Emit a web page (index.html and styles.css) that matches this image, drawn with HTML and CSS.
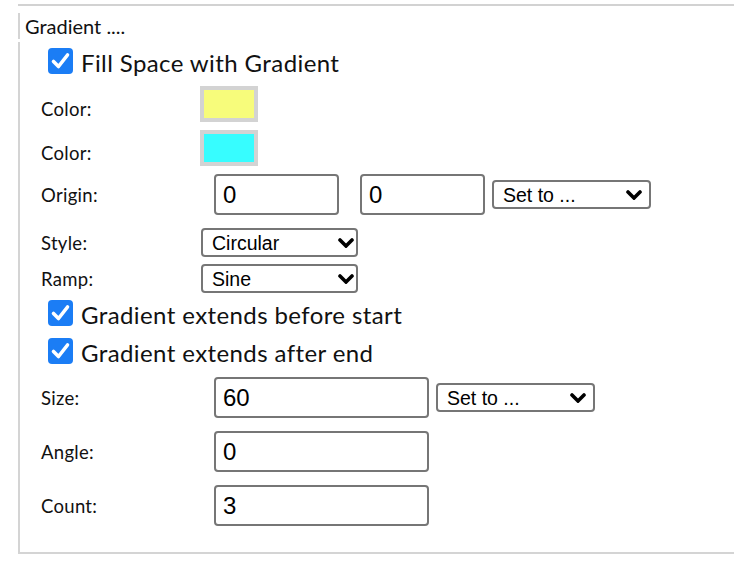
FILE: index.html
```html
<!DOCTYPE html>
<html>
<head>
<meta charset="utf-8">
<link rel="stylesheet" href="styles.css">
</head>
<body>
<div class="page">
  <div class="rule"></div>
  <div class="legend">Gradient ....</div>
  <div class="panel">
    <label class="row check-row">
      <span class="cb"><svg viewBox="0 0 25 26" width="25" height="26"><path d="M5.5 13.5 L10.5 18.5 L19.5 7" fill="none" stroke="#fff" stroke-width="3.6" stroke-linecap="round" stroke-linejoin="round"/></svg></span>
      <span class="cb-text">Fill Space with Gradient</span>
    </label>
    <div class="row color-row m12"><span class="lbl">Color:</span><span class="swatch yellow"></span></div>
    <div class="row color-row m8"><span class="lbl">Color:</span><span class="swatch cyan"></span></div>
    <div class="row input-row m8">
      <span class="lbl">Origin:</span>
      <input class="txt" type="text" value="0">
      <input class="txt second" type="text" value="0">
      <span class="sel-wrap setto"><select class="sel"><option>Set to ...</option></select><svg class="chev" viewBox="0 0 16 10" width="16" height="10"><path d="M2 2 L8 8 L14 2" fill="none" stroke="#000" stroke-width="3.6" stroke-linecap="round" stroke-linejoin="miter"/></svg></span>
    </div>
    <div class="row select-row m13">
      <span class="lbl">Style:</span>
      <span class="sel-wrap small"><select class="sel"><option>Circular</option></select><svg class="chev" viewBox="0 0 16 10" width="16" height="10"><path d="M2 2 L8 8 L14 2" fill="none" stroke="#000" stroke-width="3.6" stroke-linecap="round" stroke-linejoin="miter"/></svg></span>
    </div>
    <div class="row select-row m7">
      <span class="lbl">Ramp:</span>
      <span class="sel-wrap small"><select class="sel"><option>Sine</option></select><svg class="chev" viewBox="0 0 16 10" width="16" height="10"><path d="M2 2 L8 8 L14 2" fill="none" stroke="#000" stroke-width="3.6" stroke-linecap="round" stroke-linejoin="miter"/></svg></span>
    </div>
    <label class="row check-row m7">
      <span class="cb"><svg viewBox="0 0 25 26" width="25" height="26"><path d="M5.5 13.5 L10.5 18.5 L19.5 7" fill="none" stroke="#fff" stroke-width="3.6" stroke-linecap="round" stroke-linejoin="round"/></svg></span>
      <span class="cb-text">Gradient extends before start</span>
    </label>
    <label class="row check-row m12">
      <span class="cb"><svg viewBox="0 0 25 26" width="25" height="26"><path d="M5.5 13.5 L10.5 18.5 L19.5 7" fill="none" stroke="#fff" stroke-width="3.6" stroke-linecap="round" stroke-linejoin="round"/></svg></span>
      <span class="cb-text">Gradient extends after end</span>
    </label>
    <div class="row input-row m13">
      <span class="lbl">Size:</span>
      <input class="txt wide" type="text" value="60">
      <span class="sel-wrap setto"><select class="sel"><option>Set to ...</option></select><svg class="chev" viewBox="0 0 16 10" width="16" height="10"><path d="M2 2 L8 8 L14 2" fill="none" stroke="#000" stroke-width="3.6" stroke-linecap="round" stroke-linejoin="miter"/></svg></span>
    </div>
    <div class="row input-row m13">
      <span class="lbl">Angle:</span>
      <input class="txt wide" type="text" value="0">
    </div>
    <div class="row input-row m13">
      <span class="lbl">Count:</span>
      <input class="txt wide" type="text" value="3">
    </div>
  </div>
</div>
</body>
</html>
```

FILE: styles.css
```css
html, body {
  margin: 0;
  padding: 0;
  background: #fff;
}
body {
  font-family: Lato, "Noto Sans", sans-serif;
  font-weight: 400;
  color: #111;
}
.page {
  margin-left: 18px;
  width: 716px;
  padding-top: 4px;
}
.rule {
  height: 2px;
  background: #d2d2d2;
}
.legend {
  margin-top: 7px;
  border-left: 2px solid #d4d4d4;
  height: 26px;
  line-height: 26px;
  padding-left: 5px;
  font-size: 20px;
}
.panel {
  margin-top: 3px;
  border-left: 2px solid #d4d4d4;
  border-bottom: 2px solid #d4d4d4;
  padding: 6px 0 26px 21px;
  display: flex;
  flex-direction: column;
}
.row {
  display: flex;
  align-items: center;
}
.m7 { margin-top: 7px; }
.m8 { margin-top: 8px; }
.m12 { margin-top: 12px; }
.m13 { margin-top: 13px; }
.check-row {
  height: 26px;
  padding-left: 7px;
}
.color-row { height: 36px; }
.color-row .lbl { margin-top: 10px; }
.input-row { height: 41px; }
.select-row { height: 29px; }
.lbl {
  width: 159px;
  flex: none;
  font-size: 18.5px;
  letter-spacing: 0.3px;
}
.cb {
  width: 25px;
  height: 26px;
  flex: none;
  background: #1b7df5;
  border-radius: 4px;
  display: flex;
}
.cb-text {
  margin-left: 8px;
  font-size: 24px;
  letter-spacing: 0.4px;
  position: relative;
  top: 1px;
}
.swatch {
  width: 58px;
  height: 36px;
  box-sizing: border-box;
  border: 4px solid #d3d3d3;
}
.yellow { background: #f7fc7b; }
.cyan { background: #37fdff; }
.txt {
  margin: 0 0 0 14px;
  width: 125px;
  height: 41px;
  box-sizing: border-box;
  border: 2px solid #767676;
  border-radius: 4px;
  padding: 0 7px;
  font-family: "Liberation Sans", Arial, sans-serif;
  font-weight: 400;
  font-size: 24px;
  color: #000;
  background: #fff;
  outline: none;
}
.txt.second { margin-left: 21px; }
.txt.wide { width: 215px; }
.sel-wrap {
  display: inline-grid;
  height: 29px;
  margin-left: 7px;
}
.sel-wrap.setto { width: 159px; }
.sel-wrap.small { width: 157px; margin-left: 1px; }
.sel {
  grid-area: 1 / 1;
  appearance: none;
  -webkit-appearance: none;
  width: 100%;
  height: 29px;
  box-sizing: border-box;
  border: 2px solid #767676;
  border-radius: 4px;
  background: #fff;
  padding: 0 0 0 9px;
  margin: 0;
  font-family: "Liberation Sans", Arial, sans-serif;
  font-weight: 400;
  font-size: 19.5px;
  color: #000;
  outline: none;
}
.chev {
  grid-area: 1 / 1;
  justify-self: end;
  align-self: center;
  margin-right: 4px;
  pointer-events: none;
}
.setto .chev { margin-right: 9px; }
```
